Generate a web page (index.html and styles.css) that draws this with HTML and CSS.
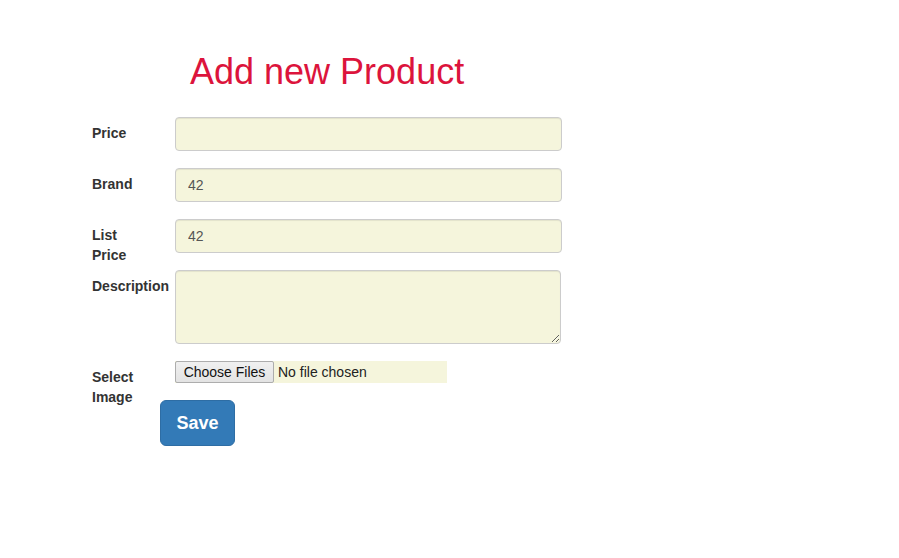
FILE: index.html
```html
<!DOCTYPE html>
<html>
<head>
<meta charset="utf-8">
<link rel="stylesheet" href="styles.css">
</head>
<body>
<div class="page">
  <h1 class="title">Add new Product</h1>
  <form class="form">
    <div class="row">
      <label class="lbl">Price</label>
      <input class="ctl" type="text" value="">
    </div>
    <div class="row">
      <label class="lbl">Brand</label>
      <input class="ctl" type="text" value="42">
    </div>
    <div class="row">
      <label class="lbl">List Price</label>
      <input class="ctl" type="text" value="42">
    </div>
    <div class="row">
      <label class="lbl">Description</label>
      <textarea class="ctl area" rows="3"></textarea>
    </div>
    <div class="row file-row">
      <label class="lbl">Select Image</label>
      <div class="file">
        <span class="file-btn">Choose Files</span>
        <span class="file-name">No file chosen</span>
      </div>
    </div>
    <div class="actions">
      <button type="button" class="save">Save</button>
    </div>
  </form>
</div>
</body>
</html>
```
FILE: styles.css
```css
* { box-sizing: border-box; }
html, body { margin: 0; padding: 0; background: #fff; }
body {
  font-family: "Liberation Sans", Arial, sans-serif;
  font-size: 14px;
  line-height: 20px;
  color: #333;
}
.page {
  padding: 52px 0 0 92px;
}
.title {
  margin: 0 0 25px 98px;
  font-size: 36px;
  line-height: 39.6px;
  font-weight: 400;
  color: #dc143c;
}
.form {
  display: flex;
  flex-direction: column;
  gap: 17px;
}
.row {
  display: flex;
  align-items: flex-start;
}
.lbl {
  flex: none;
  width: 56px;
  height: 34px;
  margin-right: 27px;
  padding-top: 6px;
  font-weight: 700;
  color: #333;
}
.row:nth-child(4) .lbl { white-space: nowrap; }
.ctl {
  width: 387px;
  height: 34px;
  padding: 6px 12px;
  font-family: "Liberation Sans", Arial, sans-serif;
  font-size: 14px;
  line-height: 20px;
  color: #555;
  background: #f5f5dc;
  border: 1px solid #ccc;
  border-radius: 4px;
  box-shadow: inset 0 1px 1px rgba(0,0,0,.075);
  outline: none;
}
.area {
  width: 386px;
  height: 74px;
  resize: vertical;
  display: block;
}
.file-row {
  height: 22px;
}
.file-row .lbl {
  padding-top: 6px;
}
.file {
  display: flex;
  align-items: center;
  width: 272px;
  height: 22px;
  background: #f5f5dc;
  font-family: "Liberation Sans", Arial, sans-serif;
  font-size: 14px;
  color: #222;
}
.file-btn {
  display: flex;
  align-items: center;
  justify-content: center;
  width: 99px;
  height: 22px;
  border: 1px solid #adadad;
  border-radius: 2px;
  background: linear-gradient(#f0f0f0, #e3e3e3);
  color: #111;
}
.file-name {
  padding-left: 4px;
}
.actions {
  padding-left: 68px;
}
.save {
  width: 75px;
  height: 46px;
  padding: 10px 0;
  font-family: "Liberation Sans", Arial, sans-serif;
  font-size: 18px;
  font-weight: 700;
  line-height: 24px;
  color: #fff;
  background: #337ab7;
  border: 1px solid #2e6da4;
  border-radius: 6px;
  cursor: pointer;
}
```
